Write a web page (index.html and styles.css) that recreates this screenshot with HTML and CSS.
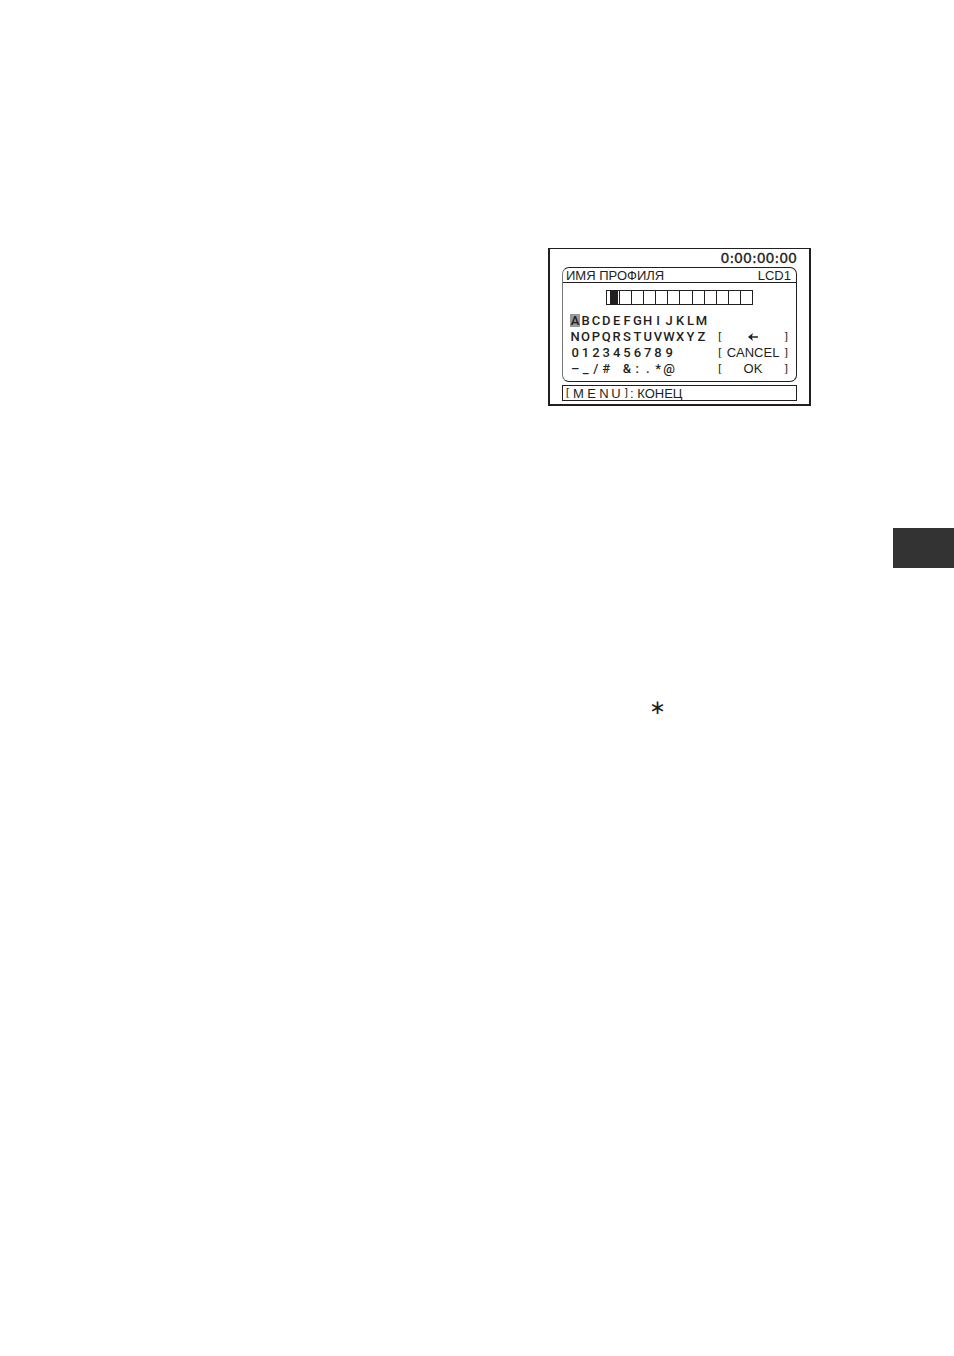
FILE: index.html
```html
<!DOCTYPE html>
<html lang="ru">

<head>
  <meta charset="UTF-8">
  <meta name="viewport" content="width=device-width, initial-scale=1.0">
  <title>Имя профиля</title>
  <link rel="stylesheet" href="styles.css">
</head>

<body>
  <main class="page">
    <section class="screen">
      <div class="timecode">0:00:00:00</div>

      <div class="panel">
        <header class="panel-title">
          <span>ИМЯ ПРОФИЛЯ</span>
          <span>LCD1</span>
        </header>

        <!-- Profile name, one box per character -->
        <div class="name">
          <span class="cursor"></span><span></span><span></span><span></span><span></span><span></span>
          <span></span><span></span><span></span><span></span><span></span><span></span>
        </div>

        <div class="keyboard">
          <div class="keys">
            <button class="selected">A</button><button>B</button><button>C</button><button>D</button><button>E</button><button>F</button><button>G</button><button>H</button><button>I</button><button>J</button><button>K</button><button>L</button><button>M</button>
            <button>N</button><button>O</button><button>P</button><button>Q</button><button>R</button><button>S</button><button>T</button><button>U</button><button>V</button><button>W</button><button>X</button><button>Y</button><button>Z</button>
            <button class="row-start">0</button><button>1</button><button>2</button><button>3</button><button>4</button><button>5</button><button>6</button><button>7</button><button>8</button><button>9</button>
            <button class="row-start">–</button><button>_</button><button>/</button><button>#</button><button aria-label="Пробел"></button><button>&amp;</button><button>:</button><button>.</button><button>*</button><button>@</button>
          </div>

          <div class="actions">
            <button aria-label="Удалить">
              <span class="bracket">[</span>
              <svg class="arrow" viewBox="0 0 10 8" width="10" height="8">
                <path d="M0 4 L5 0 L4 3.2 H10 V4.8 H4 L5 8 Z" fill="#231f20"/>
              </svg>
              <span class="bracket">]</span>
            </button>
            <button><span class="bracket">[</span>CANCEL<span class="bracket">]</span></button>
            <button><span class="bracket">[</span>OK<span class="bracket">]</span></button>
          </div>
        </div>
      </div>

      <footer class="hint">
        <span class="menu-key"><span class="bracket">[</span><span>M</span><span>E</span><span>N</span><span>U</span><span class="bracket">]</span></span>
        <span>: КОНЕЦ</span>
      </footer>
    </section>

    <div class="tab"></div>

    <div class="note">∗</div>
  </main>
</body>

</html>
```

FILE: styles.css
```css
* {
  box-sizing: border-box;
}

body {
  margin: 0;
  background: #fff;
  color: #231f20;
  font-family: "Liberation Sans", Arial, sans-serif;
  font-size: 13px;
  line-height: 16px;
}

button {
  margin: 0;
  padding: 0;
  border: none;
  background: none;
  color: inherit;
  font: inherit;
  cursor: pointer;
}

.page {
  display: flex;
  flex-direction: column;
  align-items: flex-end;
  min-height: 100vh;
  padding-top: 248px;
}

.screen {
  width: 263px;
  margin-right: 143px;
  padding: 1px 12px 3px;
  border: 2px solid #231f20;
  border-top-width: 1px;
}

.timecode {
  height: 17px;
  font-family: "DejaVu Sans", sans-serif;
  font-size: 14px;
  text-align: right;
  -webkit-text-stroke: 0.3px #231f20;
}

.panel {
  border: 1px solid #231f20;
  border-left-color: #777;
  border-radius: 7px;
}

.panel-title {
  display: flex;
  justify-content: space-between;
  height: 15px;
  padding: 0 5px 0 3px;
  border-bottom: 1px solid #231f20;
  line-height: 15px;
}

.name {
  display: grid;
  grid-template-columns: repeat(12, 1fr);
  margin: 7px 43px 8px;
  border: 1px solid #231f20;
}

.name span {
  height: 13px;
  border-left: 1px solid #231f20;
}

.name .cursor {
  border-left: none;
  background: linear-gradient(#231f20, #231f20) 3px 0 / 8px 100% no-repeat;
}

.keyboard {
  display: flex;
  justify-content: space-between;
  padding: 0 8px 4px 7px;
}

.keys {
  display: grid;
  grid-template-columns: repeat(13, 1fr);
  width: 137px;
  font-family: Roboto, sans-serif;
  font-weight: 500;
}

.keys .row-start {
  grid-column: 1;
}

.keys .selected {
  height: 13px;
  margin-top: 1px;
  background: #999;
  line-height: 14px;
}

.actions {
  display: flex;
  flex-direction: column;
  width: 70px;
  padding-top: 16px;
}

.actions button {
  display: flex;
  justify-content: space-between;
  align-items: center;
  height: 16px;
}

.bracket {
  font-family: "DejaVu Sans", sans-serif;
  font-size: 11px;
  line-height: 14px;
}

.hint {
  display: flex;
  height: 16px;
  margin-top: 3px;
  padding-left: 1px;
  border: 1px solid #231f20;
  line-height: 15px;
}

.menu-key {
  display: grid;
  grid-template-columns: 8px 13px 13px 12px 12px 8px;
  text-align: center;
}

.tab {
  width: 61px;
  height: 40px;
  margin-top: 122px;
  background: #333;
}

.note {
  margin: 127px 288px 0 0;
  font-family: "DejaVu Sans", sans-serif;
  font-size: 20px;
  line-height: 24px;
}
```
